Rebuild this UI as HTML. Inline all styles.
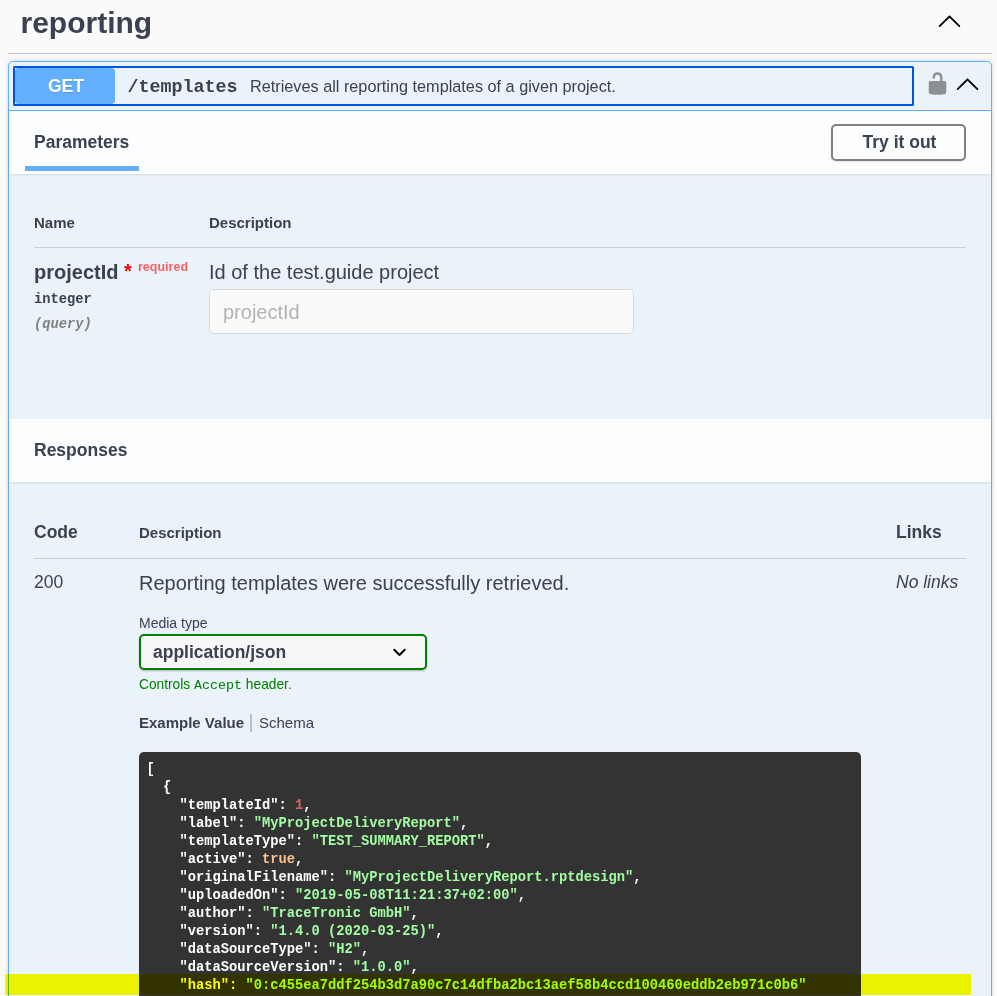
<!DOCTYPE html>
<html><head><meta charset="utf-8"><style>
html,body{margin:0;padding:0;}
body{width:997px;height:996px;overflow:hidden;background:#fafafa;position:relative;font-family:'Liberation Sans', sans-serif;color:#3b4151;}
.t{position:absolute;white-space:nowrap;}
.s{color:#a2fca2} .n{color:#d36363} .b{color:#fcc28c}
</style></head><body>
<div class="t" style="left:20.5px;top:3.90px;font-size:30px;line-height:38px;font-weight:700;color:#3b4151;font-style:normal;font-family:'Liberation Sans', sans-serif;">reporting</div>
<div class="t" style="left:8px;top:53px;width:984px;height:1px;background:rgba(59,65,81,.3)"></div>
<svg class="t" style="left:937px;top:8px" width="25" height="25" viewBox="0 0 20 20"><path d="M17.418 14.908c.272.268.709.268.979 0s.271-.701 0-.969l-7.908-7.83c-.27-.268-.707-.268-.979 0l-7.908 7.83c-.27.268-.27.701 0 .969.271.268.709.268.979 0L10 7.767l7.418 7.141z"/></svg>
<div class="t" style="left:8px;top:61px;width:984px;height:1000px;box-sizing:border-box;border:1px solid #61affe;border-radius:5px;background:rgba(97,175,254,.1);box-shadow:0 0 3.75px rgba(0,0,0,.19)"></div>
<div class="t" style="left:9px;top:110px;width:982px;height:1px;background:#61affe"></div>
<div class="t" style="left:13px;top:66px;width:901px;height:40px;box-sizing:border-box;border:2.5px solid #0056da;border-radius:1.5px"></div>
<div class="t" style="left:15px;top:68px;width:100px;height:36px;background:#61affe;border-radius:3.75px"></div>
<div class="t" style="left:16px;top:75.00px;font-size:17.6px;line-height:22px;font-weight:700;color:#fff;font-style:normal;font-family:'Liberation Sans', sans-serif;width:100px;text-align:center;text-shadow:0 1px 0 rgba(0,0,0,.1)">GET</div>
<div class="t" style="left:127.5px;top:75.50px;font-size:18.33px;line-height:23px;font-weight:700;color:#3b4151;font-style:normal;font-family:'Liberation Mono', monospace;">/templates</div>
<div class="t" style="left:250px;top:76.10px;font-size:16.25px;line-height:21px;font-weight:400;color:#3b4151;font-style:normal;font-family:'Liberation Sans', sans-serif;">Retrieves all reporting templates of a given project.</div>
<svg class="t" style="left:925px;top:71px;fill:#8e9193" width="25" height="25" viewBox="0 0 20 20"><path d="M15.8 8H14V5.6C14 2.703 12.665 1 10 1 7.334 1 6 2.703 6 5.6V6h2v-.801C8 3.754 8.797 3 10 3c1.203 0 2 .754 2 2.199V8H4c-.553 0-1 .646-1 1.199V17c0 .549.428 1.139.951 1.307l1.197.387C5.672 18.861 6.55 19 7.1 19h5.8c.549 0 1.428-.139 1.951-.307l1.196-.387c.524-.167.953-.757.953-1.306V9.199C17 8.646 16.352 8 15.8 8z"/></svg>
<svg class="t" style="left:955px;top:71px" width="25" height="25" viewBox="0 0 20 20"><path d="M17.418 14.908c.272.268.709.268.979 0s.271-.701 0-.969l-7.908-7.83c-.27-.268-.707-.268-.979 0l-7.908 7.83c-.27.268-.27.701 0 .969.271.268.709.268.979 0L10 7.767l7.418 7.141z"/></svg>
<div class="t" style="left:9px;top:111px;width:982px;height:63px;background:rgba(255,255,255,.8);box-shadow:0 1px 2px rgba(0,0,0,.1)"></div>
<div class="t" style="left:34px;top:130.70px;font-size:17.5px;line-height:22px;font-weight:700;color:#3b4151;font-style:normal;font-family:'Liberation Sans', sans-serif;">Parameters</div>
<div class="t" style="left:25px;top:166px;width:114px;height:5px;background:#61affe"></div>
<div class="t" style="left:831px;top:124px;width:135px;height:37px;box-sizing:border-box;border:2.5px solid gray;border-radius:5px;box-shadow:0 1px 2px rgba(0,0,0,.1);background:transparent"></div>
<div class="t" style="left:832px;top:130.80px;font-size:17.5px;line-height:22px;font-weight:700;color:#3b4151;font-style:normal;font-family:'Liberation Sans', sans-serif;width:135px;text-align:center">Try it out</div>
<div class="t" style="left:34px;top:213.00px;font-size:15px;line-height:19px;font-weight:700;color:#3b4151;font-style:normal;font-family:'Liberation Sans', sans-serif;">Name</div>
<div class="t" style="left:209px;top:213.00px;font-size:15px;line-height:19px;font-weight:700;color:#3b4151;font-style:normal;font-family:'Liberation Sans', sans-serif;">Description</div>
<div class="t" style="left:34px;top:247px;width:932px;height:1px;background:rgba(59,65,81,.2)"></div>
<div class="t" style="left:34px;top:260.30px;font-size:20px;line-height:25px;font-weight:700;color:#3b4151;font-style:normal;font-family:'Liberation Sans', sans-serif;">projectId</div>
<div class="t" style="left:124px;top:259.00px;font-size:20px;line-height:25px;font-weight:700;color:red;font-style:normal;font-family:'Liberation Sans', sans-serif;">*</div>
<div class="t" style="left:138px;top:259.30px;font-size:12.5px;line-height:16px;font-weight:700;color:rgba(255,0,0,.6);font-style:normal;font-family:'Liberation Sans', sans-serif;">required</div>
<div class="t" style="left:34px;top:290.50px;font-size:13.75px;line-height:18px;font-weight:700;color:#3b4151;font-style:normal;font-family:'Liberation Mono', monospace;">integer</div>
<div class="t" style="left:34px;top:315.50px;font-size:13.75px;line-height:18px;font-weight:600;color:gray;font-style:italic;font-family:'Liberation Mono', monospace;">(query)</div>
<div class="t" style="left:209px;top:260.30px;font-size:20px;line-height:25px;font-weight:400;color:#3b4151;font-style:normal;font-family:'Liberation Sans', sans-serif;">Id of the test.guide project</div>
<div class="t" style="left:209px;top:289px;width:425px;height:45px;box-sizing:border-box;border:1px solid #d9d9d9;border-radius:5px;background:#fafafa"></div>
<div class="t" style="left:223px;top:299.50px;font-size:20px;line-height:25px;font-weight:400;color:#b3b3b3;font-style:normal;font-family:'Liberation Sans', sans-serif;">projectId</div>
<div class="t" style="left:9px;top:419px;width:982px;height:63px;background:rgba(255,255,255,.8);box-shadow:0 1px 2px rgba(0,0,0,.1)"></div>
<div class="t" style="left:34px;top:438.80px;font-size:17.5px;line-height:22px;font-weight:700;color:#3b4151;font-style:normal;font-family:'Liberation Sans', sans-serif;">Responses</div>
<div class="t" style="left:34px;top:520.70px;font-size:17.5px;line-height:22px;font-weight:700;color:#3b4151;font-style:normal;font-family:'Liberation Sans', sans-serif;">Code</div>
<div class="t" style="left:139px;top:522.70px;font-size:15px;line-height:19px;font-weight:700;color:#3b4151;font-style:normal;font-family:'Liberation Sans', sans-serif;">Description</div>
<div class="t" style="left:896px;top:520.90px;font-size:17.5px;line-height:22px;font-weight:700;color:#3b4151;font-style:normal;font-family:'Liberation Sans', sans-serif;">Links</div>
<div class="t" style="left:34px;top:558px;width:932px;height:1px;background:rgba(59,65,81,.2)"></div>
<div class="t" style="left:34px;top:571.00px;font-size:17.5px;line-height:22px;font-weight:400;color:#3b4151;font-style:normal;font-family:'Liberation Sans', sans-serif;">200</div>
<div class="t" style="left:139px;top:570.50px;font-size:20px;line-height:25px;font-weight:400;color:#3b4151;font-style:normal;font-family:'Liberation Sans', sans-serif;">Reporting templates were successfully retrieved.</div>
<div class="t" style="left:896px;top:570.70px;font-size:17.5px;line-height:22px;font-weight:400;color:#3b4151;font-style:italic;font-family:'Liberation Sans', sans-serif;">No links</div>
<div class="t" style="left:139px;top:614.30px;font-size:14px;line-height:18px;font-weight:400;color:#3b4151;font-style:normal;font-family:'Liberation Sans', sans-serif;">Media type</div>
<div class="t" style="left:139px;top:634px;width:288px;height:36px;box-sizing:border-box;border:2.5px solid green;border-radius:5px;background:#f7f7f7;box-shadow:0 1px 2px rgba(0,0,0,.25)"></div>
<div class="t" style="left:153px;top:640.80px;font-size:17.5px;line-height:22px;font-weight:700;color:#3b4151;font-style:normal;font-family:'Liberation Sans', sans-serif;">application/json</div>
<svg class="t" style="left:390px;top:644px" width="20" height="16" viewBox="0 0 20 16"><polyline points="4.3,5.8 9.5,11 14.7,5.8" fill="none" stroke="#000" stroke-width="2" stroke-linecap="round" stroke-linejoin="round"/></svg>
<div class="t" style="left:139px;top:675.70px;font-size:13.75px;line-height:18px;font-weight:400;color:green;font-style:normal;font-family:'Liberation Sans', sans-serif;">Controls <span style="font-family:'Liberation Mono', monospace;font-size:13.33px">Accept</span> header.</div>
<div class="t" style="left:139px;top:712.60px;font-size:15px;line-height:19px;font-weight:700;color:#3b4151;font-style:normal;font-family:'Liberation Sans', sans-serif;">Example Value</div>
<div class="t" style="left:250px;top:714px;width:2px;height:18px;background:rgba(0,0,0,.2)"></div>
<div class="t" style="left:259px;top:712.60px;font-size:15px;line-height:19px;font-weight:400;color:#3b4151;font-style:normal;font-family:'Liberation Sans', sans-serif;">Schema</div>
<div class="t" style="left:139px;top:752px;width:722px;height:400px;background:#333;border-radius:5px"></div>
<div class="t" style="left:146.5px;top:760.50px;font-size:13.75px;line-height:18px;font-weight:700;color:#fff;font-style:normal;font-family:'Liberation Mono', monospace;white-space:pre">[</div>
<div class="t" style="left:146.5px;top:778.50px;font-size:13.75px;line-height:18px;font-weight:700;color:#fff;font-style:normal;font-family:'Liberation Mono', monospace;white-space:pre">  {</div>
<div class="t" style="left:146.5px;top:796.50px;font-size:13.75px;line-height:18px;font-weight:700;color:#fff;font-style:normal;font-family:'Liberation Mono', monospace;white-space:pre">    "templateId": <span class="n">1</span>,</div>
<div class="t" style="left:146.5px;top:814.50px;font-size:13.75px;line-height:18px;font-weight:700;color:#fff;font-style:normal;font-family:'Liberation Mono', monospace;white-space:pre">    "label": <span class="s">"MyProjectDeliveryReport"</span>,</div>
<div class="t" style="left:146.5px;top:832.50px;font-size:13.75px;line-height:18px;font-weight:700;color:#fff;font-style:normal;font-family:'Liberation Mono', monospace;white-space:pre">    "templateType": <span class="s">"TEST_SUMMARY_REPORT"</span>,</div>
<div class="t" style="left:146.5px;top:850.50px;font-size:13.75px;line-height:18px;font-weight:700;color:#fff;font-style:normal;font-family:'Liberation Mono', monospace;white-space:pre">    "active": <span class="b">true</span>,</div>
<div class="t" style="left:146.5px;top:868.50px;font-size:13.75px;line-height:18px;font-weight:700;color:#fff;font-style:normal;font-family:'Liberation Mono', monospace;white-space:pre">    "originalFilename": <span class="s">"MyProjectDeliveryReport.rptdesign"</span>,</div>
<div class="t" style="left:146.5px;top:886.50px;font-size:13.75px;line-height:18px;font-weight:700;color:#fff;font-style:normal;font-family:'Liberation Mono', monospace;white-space:pre">    "uploadedOn": <span class="s">"2019-05-08T11:21:37+02:00"</span>,</div>
<div class="t" style="left:146.5px;top:904.50px;font-size:13.75px;line-height:18px;font-weight:700;color:#fff;font-style:normal;font-family:'Liberation Mono', monospace;white-space:pre">    "author": <span class="s">"TraceTronic GmbH"</span>,</div>
<div class="t" style="left:146.5px;top:922.50px;font-size:13.75px;line-height:18px;font-weight:700;color:#fff;font-style:normal;font-family:'Liberation Mono', monospace;white-space:pre">    "version": <span class="s">"1.4.0 (2020-03-25)"</span>,</div>
<div class="t" style="left:146.5px;top:940.50px;font-size:13.75px;line-height:18px;font-weight:700;color:#fff;font-style:normal;font-family:'Liberation Mono', monospace;white-space:pre">    "dataSourceType": <span class="s">"H2"</span>,</div>
<div class="t" style="left:146.5px;top:958.50px;font-size:13.75px;line-height:18px;font-weight:700;color:#fff;font-style:normal;font-family:'Liberation Mono', monospace;white-space:pre">    "dataSourceVersion": <span class="s">"1.0.0"</span>,</div>
<div class="t" style="left:146.5px;top:976.50px;font-size:13.75px;line-height:18px;font-weight:700;color:#fff;font-style:normal;font-family:'Liberation Mono', monospace;white-space:pre">    "hash": <span class="s">"0:c455ea7ddf254b3d7a90c7c14dfba2bc13aef58b4ccd100460eddb2eb971c0b6"</span></div>
<div class="t" style="left:5px;top:974px;width:966px;height:21px;background:#ff0;mix-blend-mode:multiply"></div>
</body></html>
